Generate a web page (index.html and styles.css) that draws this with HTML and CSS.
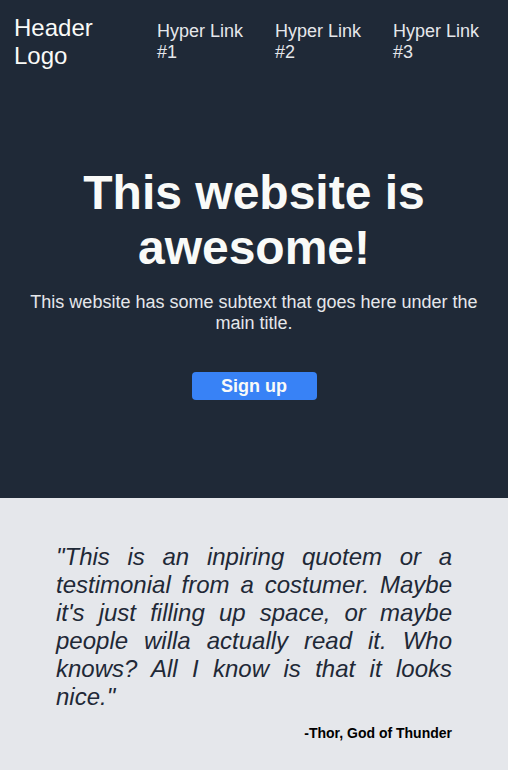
FILE: index.html
```html
<!DOCTYPE html>
<html>
<head>
<meta charset="utf-8">
<link rel="stylesheet" href="styles.css">
</head>
<body>
<div class="top">
  <header class="header">
    <div class="logo">Header Logo</div>
    <nav class="nav">
      <a class="link" href="#">Hyper Link #1</a>
      <a class="link" href="#">Hyper Link #2</a>
      <a class="link" href="#">Hyper Link #3</a>
    </nav>
  </header>
  <section class="hero">
    <h1 class="title">This website is awesome!</h1>
    <p class="sub">This website has some subtext that goes here under the main title.</p>
    <button class="btn">Sign up</button>
  </section>
</div>
<section class="quote-sec">
  <p class="quote">"This is an inpiring quotem or a testimonial from a costumer. Maybe it's just filling up space, or maybe people willa actually read it. Who knows? All I know is that it looks nice."</p>
  <p class="author">-Thor, God of Thunder</p>
</section>
</body>
</html>
```
FILE: styles.css
```css
* { box-sizing: border-box; }
body {
  margin: 0;
  font-family: "Liberation Sans", Arial, sans-serif;
  background: #e5e7eb;
}
.top {
  background: #1f2937;
  padding-bottom: 98px;
}
.header {
  display: flex;
  align-items: center;
  padding: 14px 28px 0 14px;
}
.logo {
  width: 110px;
  font-size: 24px;
  color: #f9faf8;
}
.nav {
  margin-left: auto;
  display: flex;
  gap: 31px;
}
.link {
  width: 87px;
  font-size: 18px;
  color: #e5e7eb;
  text-decoration: none;
}
.hero {
  display: flex;
  flex-direction: column;
  align-items: center;
  padding: 0 24px;
  text-align: center;
}
.title {
  margin: 95px 0 0;
  font-size: 48px;
  font-weight: bold;
  color: #f9faf8;
}
.sub {
  margin: 17px 0 0;
  font-size: 18px;
  color: #e5e7eb;
}
.btn {
  margin-top: 38px;
  width: 125px;
  height: 28px;
  border: none;
  border-radius: 4px;
  background: #3882f6;
  color: #f9faf8;
  font-family: inherit;
  font-size: 18px;
  font-weight: bold;
  padding: 0;
}
.quote-sec {
  padding: 45px 56px 40px;
}
.quote {
  margin: 0;
  font-size: 24px;
  font-style: italic;
  text-align: justify;
  color: #1f2937;
}
.author {
  margin: 14px 0 0;
  font-size: 14px;
  font-weight: bold;
  text-align: right;
  color: #000;
}
```
